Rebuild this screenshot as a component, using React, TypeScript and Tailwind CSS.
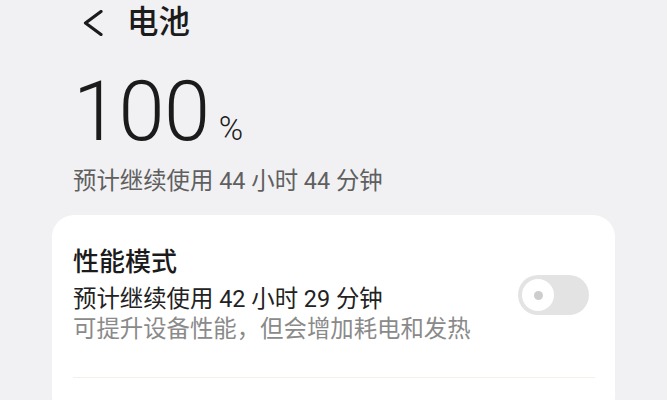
export default function App() {
  return (
    <div
      className="h-[400px] w-[667px] overflow-hidden bg-[#f1f1f3] text-[#1b1b1b]"
      style={{ fontFamily: 'Roboto, "Noto Sans CJK SC", sans-serif' }}
    >
      {/* Header */}
      <div className="flex h-[45px] items-center pl-[83px]">
        <svg width="20" height="26" viewBox="0 0 20 26" fill="none">
          <path
            d="M18 1.5 L2.5 13 L18 24.5"
            stroke="#1b1b1b"
            strokeWidth="3.2"
            strokeLinecap="round"
            strokeLinejoin="round"
          />
        </svg>
        <h1 className="ml-[24px] text-[31.5px] font-medium leading-none">电池</h1>
      </div>

      {/* Level */}
      <div className="mt-[25px] flex items-baseline pl-[73px]">
        <span className="text-[83px] font-light leading-none tracking-[-0.5px]">100</span>
        <span className="ml-[9px] text-[33px] font-light leading-none">%</span>
      </div>
      <p className="mt-[13px] pl-[73px] text-[23.4px] leading-[30px] text-[#5f5f5f]">
        预计继续使用 44 小时 44 分钟
      </p>

      {/* Card */}
      <div className="ml-[52px] mt-[19px] w-[563px] rounded-[22px] bg-white pt-[31px] pb-[40px]">
        <div className="flex items-center pl-[21px] pr-[26px]">
          <div className="flex-1">
            <h2 className="text-[26px] font-medium leading-[32px]">性能模式</h2>
            <p className="mt-[6px] text-[23.4px] leading-[30px] text-[#222]">
              预计继续使用 42 小时 29 分钟
            </p>
            <p className="text-[23.4px] leading-[30px] text-[#8a8a8a]">
              可提升设备性能，但会增加耗电和发热
            </p>
          </div>
          <div className="flex h-[40px] w-[71px] items-center rounded-full bg-[#e3e3e3] pl-[4px]">
            <div className="flex h-[32px] w-[32px] items-center justify-center rounded-full bg-white">
              <div className="h-[9px] w-[9px] rounded-full bg-[#cdcdcd]" />
            </div>
          </div>
        </div>
        <div className="ml-[21px] mr-[20px] mt-[33px] h-px bg-[#f4efe9]" />
      </div>
    </div>
  );
}
